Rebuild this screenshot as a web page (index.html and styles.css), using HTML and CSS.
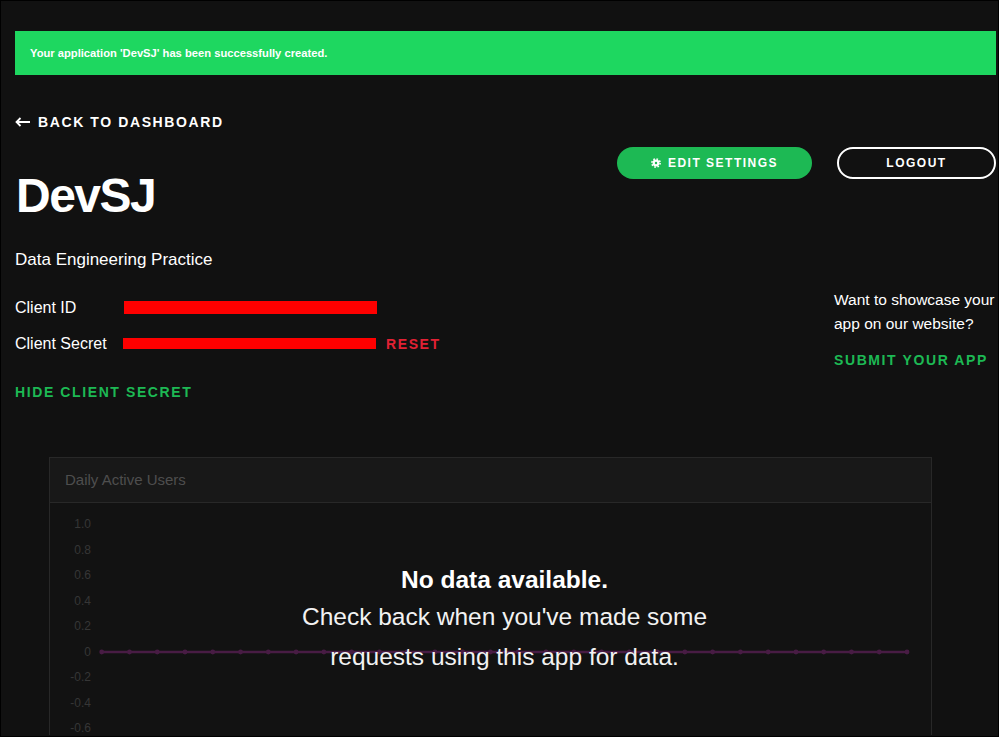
FILE: index.html
```html
<!DOCTYPE html>
<html lang="en">
<head>
<meta charset="utf-8">
<title>DevSJ - Dashboard</title>
<link rel="stylesheet" href="styles.css">
</head>
<body>
<div class="page">
  <div class="banner">Your application 'DevSJ' has been successfully created.</div>

  <a class="back" href="#">
    <svg class="back-arrow" width="15" height="10" viewBox="0 0 15 10"><path d="M1 5 H15 M5.5 1 L1.5 5 L5.5 9" fill="none" stroke="#fff" stroke-width="1.8"/></svg>
    <span>BACK TO DASHBOARD</span>
  </a>

  <div class="row">
    <div class="main">
      <h1 class="title">DevSJ</h1>
      <p class="desc">Data Engineering Practice</p>
      <div class="creds">
        <div class="cred-row">
          <span class="cred-label">Client ID</span>
          <span class="redact redact-id"></span>
        </div>
        <div class="cred-row">
          <span class="cred-label">Client Secret</span>
          <span class="redact redact-secret"></span>
          <a class="link link-red" href="#">RESET</a>
        </div>
      </div>
      <a class="link link-green hide" href="#">HIDE CLIENT SECRET</a>
    </div>

    <aside class="aside">
      <div class="buttons">
        <button class="btn btn-green">
          <svg class="gear" width="10" height="10" viewBox="0 0 10 10"><circle cx="5" cy="5" r="3.4" fill="#fff"/><circle cx="5" cy="5" r="4.1" fill="none" stroke="#fff" stroke-width="1.6" stroke-dasharray="1.6 1.62"/><circle cx="5" cy="5" r="1.2" fill="#1db954"/></svg>
          <span>EDIT SETTINGS</span>
        </button>
        <button class="btn btn-outline">LOGOUT</button>
      </div>
      <div class="showcase">
        <p class="showcase-text">Want to showcase your<br>app on our website?</p>
        <a class="link link-green submit" href="#">SUBMIT YOUR APP</a>
      </div>
    </aside>
  </div>

  <section class="panel">
    <div class="panel-head">Daily Active Users</div>
    <div class="panel-body">
      <svg class="chart" width="881" height="232" viewBox="0 0 881 232">
        <g class="ticks" font-family="Liberation Sans, Arial, sans-serif" font-size="12" fill="#363636" text-anchor="end">
          <text x="41" y="25.3">1.0</text>
          <text x="41" y="50.8">0.8</text>
          <text x="41" y="76.3">0.6</text>
          <text x="41" y="101.8">0.4</text>
          <text x="41" y="127.3">0.2</text>
          <text x="41" y="152.8">0</text>
          <text x="41" y="178.3">-0.2</text>
          <text x="41" y="203.8">-0.4</text>
          <text x="41" y="229.3">-0.6</text>
        </g>
        <line x1="51.7" y1="149" x2="857" y2="149" stroke="#481c44" stroke-width="2.4"/>
        <g id="dots" fill="#481c44"></g>
      </svg>
      <div class="empty">
        <p class="empty-title">No data available.</p>
        <p class="empty-text">Check back when you've made some<br>requests using this app for data.</p>
      </div>
    </div>
  </section>
</div>
<script>
  (function () {
    var g = document.getElementById('dots');
    var ns = 'http://www.w3.org/2000/svg';
    for (var i = 0; i < 30; i++) {
      var c = document.createElementNS(ns, 'circle');
      c.setAttribute('cx', (51.7 + i * 27.77).toFixed(2));
      c.setAttribute('cy', '149');
      c.setAttribute('r', '2.4');
      g.appendChild(c);
    }
  })();
</script>
</body>
</html>
```
FILE: styles.css
```css
* { box-sizing: border-box; }

html { background: #000; }

body {
  margin: 0;
  height: 737px;
  overflow: hidden;
  background: #111111;
  border: 1px solid #000;
  font-family: "Liberation Sans", Arial, sans-serif;
  color: #fff;
}

.page {
  height: 100%;
  overflow: hidden;
  padding: 0 2px 0 14px;
}

.banner {
  margin-top: 30px;
  height: 44px;
  background: #1ed760;
  padding-left: 15px;
  display: flex;
  align-items: center;
  font-size: 11.2px;
  font-weight: bold;
  color: #fff;
}

a { text-decoration: none; }

.back {
  margin-top: 39px;
  display: flex;
  align-items: center;
  gap: 8px;
  height: 16px;
  color: #fff;
  font-size: 14px;
  font-weight: bold;
  letter-spacing: 1.6px;
  line-height: 16px;
}

.back-arrow { flex: none; }

.row {
  display: flex;
}

.main {
  flex: 1;
}

.title {
  margin: 37px 0 0;
  font-size: 48px;
  line-height: 57.6px;
  font-weight: bold;
  letter-spacing: -1.5px;
  padding-left: 1px;
}

.desc {
  margin: 23px 0 0;
  font-size: 17px;
  line-height: 24px;
}

.creds {
  margin-top: 24px;
  display: flex;
  flex-direction: column;
  gap: 12px;
}

.cred-row {
  display: flex;
  align-items: center;
  height: 24px;
  font-size: 16px;
}

.cred-label {
  width: 108px;
  flex: none;
}

.redact {
  display: inline-block;
  background: #ff0000;
  width: 253px;
}

.redact-id { height: 13px; margin-left: 1px; }
.redact-secret { height: 11px; }

.link {
  font-size: 14px;
  font-weight: bold;
  letter-spacing: 1.6px;
  line-height: 16px;
}

.link-red { color: #e22134; margin-left: 10px; }
.link-green { color: #1db954; }

.hide {
  display: block;
  margin-top: 28px;
}

.aside {
  width: 379px;
  flex: none;
  margin-top: 17px;
}

.buttons {
  display: flex;
  justify-content: flex-end;
  gap: 25px;
}

.btn {
  height: 32px;
  border-radius: 16px;
  font-family: "Liberation Sans", Arial, sans-serif;
  font-size: 12px;
  font-weight: bold;
  letter-spacing: 1.5px;
  color: #fff;
  display: flex;
  align-items: center;
  justify-content: center;
  padding: 0;
  cursor: pointer;
}

.btn-green {
  width: 195px;
  background: #1db954;
  border: none;
  gap: 7px;
}

.gear { flex: none; }

.btn-outline {
  width: 159px;
  background: transparent;
  border: 2px solid #fff;
}

.showcase {
  margin-top: 109px;
  padding-left: 217px;
}

.showcase-text {
  margin: 0;
  font-size: 15.5px;
  line-height: 24px;
  white-space: nowrap;
}

.submit {
  display: block;
  margin-top: 16px;
}

.panel {
  margin: 57px 0 0 34px;
  width: 883px;
  border: 1px solid #282828;
  border-bottom: none;
}

.panel-head {
  height: 45px;
  background: #181818;
  border-bottom: 1px solid #282828;
  padding-left: 15px;
  display: flex;
  align-items: center;
  font-size: 15px;
  color: #4e4e4e;
}

.panel-body {
  position: relative;
  height: 232px;
  background: #121212;
}

.chart { display: block; }

.empty {
  position: absolute;
  left: 52px;
  top: 60px;
  width: 805px;
  text-align: center;
  color: #fff;
}

.empty-title {
  margin: 0;
  font-size: 24.5px;
  line-height: 34px;
  font-weight: bold;
}

.empty-text {
  margin: 0;
  font-size: 24.5px;
  line-height: 40px;
  color: #f2f2f2;
}
```
